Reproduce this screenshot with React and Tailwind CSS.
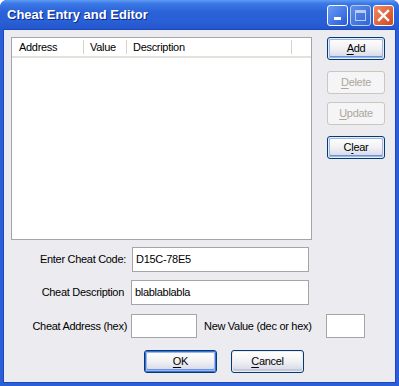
import React from 'react';

const font = { fontFamily: '"Liberation Sans", Arial, sans-serif' };

const XpButton = ({ label, k, disabled, focus, className = '' }) => {
    const i = label.indexOf(k);
    const text = (
        <span>
            {label.slice(0, i)}
            <span className="underline underline-offset-[2px]">{k}</span>
            {label.slice(i + 1)}
        </span>
    );
    if (disabled) {
        return (
            <div className={`flex items-center justify-center rounded-[3px] border border-[#cac8bb] bg-[#f5f4f7] text-[11px] tracking-[-0.3px] text-[#aca899] ${className}`}>
                {text}
            </div>
        );
    }
    return (
        <div className={`flex items-center justify-center rounded-[3px] border border-[#003c74] p-px text-[11px] tracking-[-0.3px] text-black ${className}`}>
            <div className={`flex h-full w-full items-center justify-center rounded-[2px] bg-gradient-to-b from-white via-[#f1f1f4] to-[#d3d8e6] ${focus ? 'shadow-[inset_0_0_0_1px_#9db7ea,inset_0_-1px_0_1px_#6b93dc]' : 'shadow-[inset_0_-2px_0_#c3c9db]'}`}>
                {text}
            </div>
        </div>
    );
};

const Field = ({ value, className = '' }) => (
    <div className={`border border-[#a5a5a8] bg-white px-[3px] pt-[3px] text-[11px] tracking-[-0.3px] text-black ${className}`}>
        {value}
    </div>
);

export default function App() {
    return (
        <div className="h-[386px] w-[399px] overflow-hidden bg-white" style={font}>
            <div className="flex h-full w-full flex-col rounded-t-[7px] bg-[#2a5fd8]">
                {/* Title bar */}
                <div className="flex h-[30px] items-center rounded-t-[7px] bg-[linear-gradient(to_bottom,#5e9bf2_0%,#3b78e6_12%,#2a62d8_40%,#2a5fd6_70%,#2356cc_100%)] pl-[7px] pr-[5px]">
                    <span className="flex-1 text-[13px] font-bold text-white [text-shadow:1px_1px_0_#0c2a86]">
                        Cheat Entry and Editor
                    </span>
                    <div className="flex gap-[2px]">
                        <div className="flex h-[21px] w-[21px] items-end justify-center rounded-[3px] border border-white bg-gradient-to-br from-[#6a9cf4] to-[#2a5ad8] pb-[5px]">
                            <div className="h-[3px] w-[7px] bg-white" />
                        </div>
                        <div className="flex h-[21px] w-[21px] items-center justify-center rounded-[3px] border border-[#b8cdf4] bg-gradient-to-br from-[#5f8fe6] to-[#3364d6]">
                            <div className="h-[11px] w-[11px] border border-t-[3px] border-[#b8cdf4]" />
                        </div>
                        <div className="flex h-[21px] w-[21px] items-center justify-center rounded-[3px] border border-white bg-gradient-to-br from-[#ef8a62] to-[#d2441c]">
                            <svg width="13" height="13" viewBox="0 0 13 13">
                                <path d="M2 2 L11 11 M11 2 L2 11" stroke="white" strokeWidth="2.4" strokeLinecap="square" />
                            </svg>
                        </div>
                    </div>
                </div>

                {/* Client */}
                <div className="mx-[4px] mb-[4px] flex flex-1 flex-col bg-[#ecebf0] pl-[7px] pt-[7px] shadow-[0_0_0_1px_#1d47c0]">
                    <div className="flex">
                        <div className="flex h-[203px] w-[301px] flex-col border border-[#a5a5a8] bg-white">
                            <div className="flex h-[20px] items-center border-b-2 border-[#e2e1dc] text-[11px] tracking-[-0.3px] text-black">
                                <div className="flex h-full w-[71px] items-center pl-[7px]">Address</div>
                                <div className="h-[14px] w-px bg-[#d6d4cc]" />
                                <div className="flex h-full w-[42px] items-center pl-[6px]">Value</div>
                                <div className="h-[14px] w-px bg-[#d6d4cc]" />
                                <div className="flex h-full w-[164px] items-center pl-[6px]">Description</div>
                                <div className="h-[14px] w-px bg-[#d6d4cc]" />
                            </div>
                        </div>
                        <div className="ml-[15px] flex flex-col">
                            <XpButton label="Add" k="A" focus className="h-[23px] w-[58px]" />
                            <XpButton label="Delete" k="D" disabled className="mt-[11px] h-[23px] w-[58px]" />
                            <XpButton label="Update" k="U" disabled className="mt-[8px] h-[23px] w-[58px]" />
                            <XpButton label="Clear" k="l" focus className="mt-[11px] h-[23px] w-[58px]" />
                        </div>
                    </div>

                    <div className="mt-[7px] flex items-center whitespace-nowrap text-[11px] tracking-[-0.3px] text-black">
                        <div className="w-[115px] text-right">Enter Cheat Code:</div>
                        <Field value="D15C-78E5" className="ml-[6px] h-[25px] w-[177px]" />
                    </div>
                    <div className="mt-[8px] flex items-center whitespace-nowrap text-[11px] tracking-[-0.3px] text-black">
                        <div className="w-[113px] text-right">Cheat Description</div>
                        <Field value="blablablabla" className="ml-[7px] h-[25px] w-[178px]" />
                    </div>
                    <div className="mt-[9px] flex items-center whitespace-nowrap text-[11px] tracking-[-0.3px] text-black">
                        <div className="w-[116px] text-right">Cheat Address (hex)</div>
                        <Field value="" className="ml-[4px] h-[24px] w-[66px]" />
                        <div className="ml-[7px] w-[113px]">New Value (dec or hex)</div>
                        <Field value="" className="ml-[9px] h-[24px] w-[39px]" />
                    </div>
                    <div className="mt-[12px] flex">
                        <XpButton label="OK" k="O" focus className="ml-[133px] h-[23px] w-[73px] border-[#1a3f9c] shadow-[inset_0_0_0_1px_#3b6fe0]" />
                        <XpButton label="Cancel" k="C" className="ml-[14px] h-[23px] w-[73px]" />
                    </div>
                </div>
            </div>
        </div>
    );
}
